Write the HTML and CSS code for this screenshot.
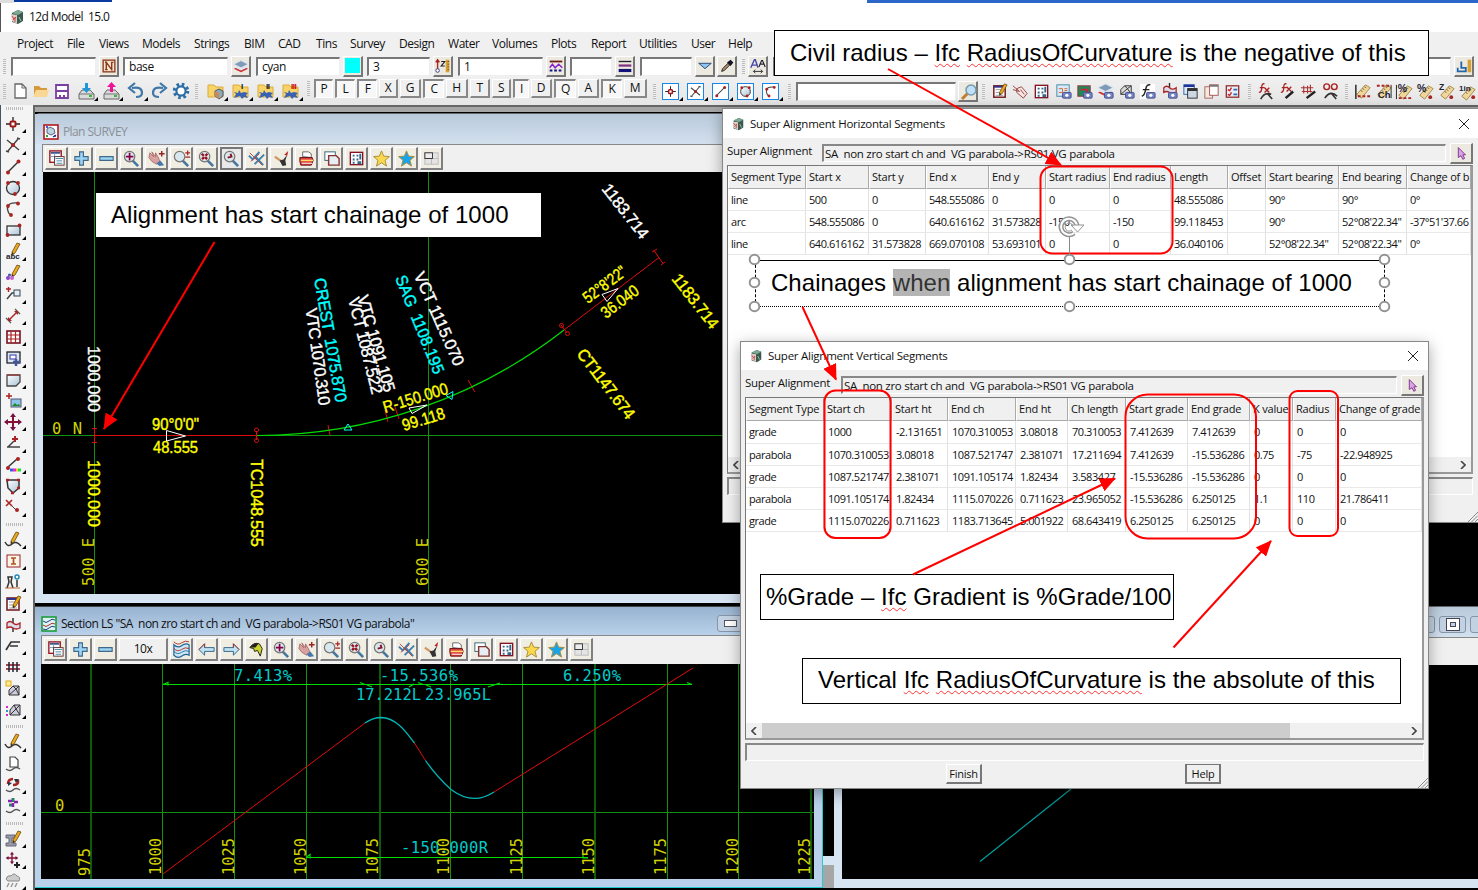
FILE: index.html
```html
<!DOCTYPE html>
<html lang="en">
<head>
<meta charset="utf-8">
<title>12d Model 15.0</title>
<link rel="stylesheet" href="styles.css">
</head>
<body>
<svg class="defs" width="0" height="0">
<defs>
<linearGradient id="steel" x1="0" y1="0" x2="1" y2="1"><stop offset="0" stop-color="#fff"/><stop offset="1" stop-color="#a9c3d6"/></linearGradient>
<marker id="head" markerUnits="userSpaceOnUse" markerWidth="17" markerHeight="14" refX="15" refY="7" orient="auto"><path d="M0 0 16 7 0 14z" fill="#f00"/></marker>
</defs>
<symbol id="cube" viewBox="0 0 16 16"><path d="M3 4 9 1l5 2v9l-5 3-6-2z" fill="#3c5a4c"/><path d="M3 4 9 1l5 2-5 3z" fill="#7fa893"/><path d="M2 5l6 1v9l-5-3z" fill="#d9cfca"/><path d="M3 7l2 3M6 8v5M4 11l3-3" stroke="#c44" fill="none"/><path d="M10 8l2 4" stroke="#9cb"/></symbol>
<symbol id="target" viewBox="0 0 20 20"><path d="M10 3v14M3 10h14" stroke="#222" stroke-width="1.3"/><rect x="7.5" y="7.5" width="5" height="5" rx="1" fill="#fff" stroke="#a01818" stroke-width="2"/></symbol>
<symbol id="cross" viewBox="0 0 20 20"><path d="M4 5l12 10M5 16 15 4M3 16l3 1M14 3l3 1" stroke="#444" stroke-width="1.4" fill="none"/><circle cx="10" cy="10" r="2" fill="#a22"/></symbol>
<symbol id="seg" viewBox="0 0 20 20"><path d="M5 15 15 5" stroke="#333" stroke-width="1.4"/><circle cx="5" cy="15.500" r="2" fill="#a22"/><circle cx="15.500" cy="4.500" r="2" fill="#a22"/></symbol>
<symbol id="circ" viewBox="0 0 20 20"><circle cx="10" cy="10" r="6.500" fill="url(#steel)" stroke="#333" stroke-width="1.300"/><circle cx="5" cy="5" r="1.900" fill="#a22"/><circle cx="15" cy="5" r="1.900" fill="#a22"/><circle cx="12" cy="16" r="1.900" fill="#a22"/></symbol>
<symbol id="arc" viewBox="0 0 20 20"><path d="M15 4Q4 3 4.500 10q1 6 4 6" fill="none" stroke="#444" stroke-width="1.400"/><circle cx="15" cy="4.500" r="1.900" fill="#a22"/><circle cx="5" cy="7" r="1.900" fill="#a22"/><circle cx="8" cy="16" r="1.900" fill="#a22"/></symbol>
<symbol id="rect" viewBox="0 0 20 20"><rect x="4" y="6" width="13" height="9" fill="url(#steel)" stroke="#333" stroke-width="1.300"/><circle cx="16.500" cy="5.500" r="1.900" fill="#a22"/><circle cx="4.500" cy="15" r="1.900" fill="#a22"/></symbol>
<symbol id="pencil" viewBox="0 0 20 20"><path d="M9 12 14 3l3 1-5 9-3 2z" fill="#e9a820" stroke="#6b4a10" stroke-width=".8"/><path d="M9 12l0 3 2-1z" fill="#333"/></symbol>
<symbol id="paint" viewBox="0 0 20 20"><use href="#pencil" y="-1"/><circle cx="5" cy="15" r="2" fill="#84c"/><circle cx="9" cy="15" r="2" fill="#c6c"/><circle cx="6.500" cy="12" r="1.600" fill="#55a"/></symbol>
<symbol id="leader" viewBox="0 0 20 20"><path d="M3 5h5M5.500 3v5" stroke="#a22" stroke-width="1.400"/><path d="M4 15l5-6h2" stroke="#444" stroke-width="1.500" fill="none"/><rect x="11" y="6" width="6" height="6" fill="#e4eef4" stroke="#345"/></symbol>
<symbol id="dim" viewBox="0 0 20 20"><path d="M6 14 14 6" stroke="#a22" stroke-width="1.500"/><path d="M3 12l5 5M12 3l5 5" stroke="#555" stroke-width="1.300"/><path d="M5 11v4h4zM11 5h4v4z" fill="#a22"/></symbol>
<symbol id="table" viewBox="0 0 20 20"><rect x="4" y="4" width="13" height="12" fill="#fff" stroke="#712" stroke-width="1.600"/><path d="M4 8h13M4 12h13M8 4v12M12.500 4v12" stroke="#a22" stroke-width="1.200"/></symbol>
<symbol id="frame" viewBox="0 0 20 20"><rect x="4" y="4" width="13" height="11" fill="#dce8f0" stroke="#223" stroke-width="1.300"/><rect x="7" y="7" width="6" height="4" fill="#fff" stroke="#33a"/><path d="M13 11v7M10 14h7" stroke="#459" stroke-width="2.500"/></symbol>
<symbol id="poly" viewBox="0 0 20 20"><path d="M4 5h13v7l-4 4H4z" fill="url(#steel)" stroke="#444" stroke-width="1.300"/><path d="M4 5h13" stroke="#a33"/></symbol>
<symbol id="image" viewBox="0 0 20 20"><path d="M3 5h6M6 2v6" stroke="#a22" stroke-width="1.500"/><rect x="8" y="8" width="10" height="8" fill="#8cc4e8" stroke="#557"/><path d="M9 15l3-3 2 2 2-1 1 2z" fill="#282"/></symbol>
<symbol id="move" viewBox="0 0 20 20"><path d="M10 4v12M4 10h12" stroke="#813" stroke-width="2"/><path d="M10 1l3 4H7zM10 19l3-4H7zM1 10l4-3v6zM19 10l-4-3v6z" fill="#714"/></symbol>
<symbol id="survey" viewBox="0 0 20 20"><path d="M12 3v6M9 6h6" stroke="#a22" stroke-width="2"/><path d="M5 14l6-6M4 14h13" stroke="#444" stroke-width="1.500"/></symbol>
<symbol id="rainbow" viewBox="0 0 20 20"><path d="M5 12 14 4" stroke="#333" stroke-width="1.500"/><circle cx="15" cy="4" r="2" fill="#a22"/><circle cx="5" cy="13" r="2" fill="#a22"/><path d="M7 15h3" stroke="#26e" stroke-width="3"/><path d="M10 15h3" stroke="#e2c" stroke-width="3"/><path d="M13 15h2" stroke="#ec2" stroke-width="3"/><path d="M15 15h3" stroke="#2d4" stroke-width="3"/></symbol>
<symbol id="shield" viewBox="0 0 20 20"><path d="M4 4h12v8l-6 5-5-5z" fill="url(#steel)" stroke="#333" stroke-width="1.500"/><path d="M3 4h3M14 4h3M14 12h3M8 17h3" stroke="#a22" stroke-width="2.500"/></symbol>
<symbol id="del" viewBox="0 0 20 20"><path d="M3 3l6 6M9 3 3 9" stroke="#a22" stroke-width="1.600"/><path d="M9 9l4 4" stroke="#444"/><circle cx="14" cy="13" r="2" fill="#a22"/></symbol>
<symbol id="draw" viewBox="0 0 20 20"><path d="M2 12q3 6 7 2t9 2" stroke="#333" stroke-width="1.500" fill="none"/><use href="#pencil" x="-1" y="-1"/></symbol>
<symbol id="ibeam" viewBox="0 0 20 20"><rect x="4" y="4" width="13" height="12" fill="#fdf4ea" stroke="#922"/><path d="M8 7h5M10.500 7v6M8 13h5" stroke="#a52" stroke-width="1.700"/></symbol>
<symbol id="people" viewBox="0 0 20 20"><path d="M4 16l2-6-1-5h4l-1 5 2 6M14 8v7" stroke="#333" stroke-width="1.500" fill="none"/><circle cx="14" cy="5" r="2" fill="#fff" stroke="#28b" stroke-width="1.500"/><path d="M2 16h15" stroke="#b63"/></symbol>
<symbol id="note" viewBox="0 0 20 20"><rect x="4" y="4" width="12" height="12" fill="#fff" stroke="#722" stroke-width="1.600"/><path d="M4 5h12" stroke="#338" stroke-width="2"/><path d="M6 8h6M6 11h6M6 14h8" stroke="#99a"/><use href="#pencil" x="1" y="-1"/></symbol>
<symbol id="align" viewBox="0 0 20 20"><path d="M10 3v14" stroke="#333" stroke-width="1.500"/><path d="M4 8q3-3 6 0t7 0v5q-4 2-7 0t-6 0z" fill="#dde" stroke="#a22" stroke-width="1.300"/></symbol>
<symbol id="step" viewBox="0 0 20 20"><path d="M3 14 8 6h9M7 10h8" stroke="#333" stroke-width="1.700" fill="none"/></symbol>
<symbol id="rail" viewBox="0 0 20 20"><path d="M3 8h14M3 12h14" stroke="#812" stroke-width="1.500"/><path d="M6 5v10M10 5v10M14 5v10" stroke="#223" stroke-width="1.500"/></symbol>
<symbol id="mesh" viewBox="0 0 20 20"><rect x="3" y="2" width="5" height="5" fill="#fe8" stroke="#da2"/><path d="M6 16V11l4-4h6v9z" fill="#ccd" stroke="#333"/><path d="M6 16l7-6 3 6M10 7l3 3 3-3" stroke="#333" fill="none"/></symbol>
<symbol id="mesh2" viewBox="0 0 20 20"><path d="M7 15v-5l4-5h6v10z" fill="#ccd" stroke="#333"/><path d="M7 15l6-6 4 6M11 5l2 4 4-4" stroke="#333" fill="none"/><path d="M4 6v2M4 14v2" stroke="#d2c" stroke-width="2"/><path d="M4 10v2" stroke="#29c" stroke-width="2"/></symbol>
<symbol id="page" viewBox="0 0 20 20"><path d="M7 3h5l3 3v7H7z" fill="#fff" stroke="#444" stroke-width="1.200"/><path d="M3 15q4 3 7 0t7 0" fill="none" stroke="#555" stroke-width="1.500"/></symbol>
<symbol id="swirl" viewBox="0 0 20 20"><path d="M5 9q0-5 5-5M15 5q1 5-5 5" stroke="#a22" stroke-width="2.500" fill="none"/><path d="M11 4l5 0-3 4zM9 8l-4 3 0-4" fill="#234"/><path d="M3 15q4 3 7 0t7 0" fill="none" stroke="#555" stroke-width="1.500"/></symbol>
<symbol id="swirl2" viewBox="0 0 20 20"><path d="M10 2v4M6 9h4" stroke="#286" stroke-width="3"/><path d="M5 5h4M10 7v4M11 6h4" stroke="#82a" stroke-width="2.500"/><path d="M3 15q4 3 7 0t7 0" fill="none" stroke="#555" stroke-width="1.500"/></symbol>
<symbol id="anvil" viewBox="0 0 20 20"><path d="M3 6h9v3H9v5h4v3H3v-3h3V9H3z" fill="#99a" stroke="#667"/><use href="#pencil" x="1" y="-1"/></symbol>
<symbol id="move2" viewBox="0 0 20 20"><use href="#move" width="14" height="14" x="2" y="1"/><path d="M14 12v6M11 15h6" stroke="#222" stroke-width="2"/></symbol>
<symbol id="cloud" viewBox="0 0 20 20"><path d="M5 10q-3-1-1-4 2-2 4-1 3-4 6 0 4 1 2 5z" fill="#ccc" stroke="#888"/><path d="M6 12l-2 4M10 12l-2 4M14 12l-2 4" stroke="#999" stroke-width="1.500"/></symbol>
<symbol id="new" viewBox="0 0 20 20"><path d="M5 3h7l4 4v10H5z" fill="#fff" stroke="#666" stroke-width="1.300"/><path d="M12 3v4h4" fill="none" stroke="#666"/></symbol>
<symbol id="open" viewBox="0 0 20 20"><path d="M3 16V5h5l2 2h6v9z" fill="#d49a3c"/><path d="M2 16l3-7h13l-2 7z" fill="#f9d795"/></symbol>
<symbol id="save" viewBox="0 0 20 20"><path d="M4 4h12v13H4z" fill="#fff" stroke="#7b3fa0" stroke-width="1.800"/><path d="M4 10h12" stroke="#7b3fa0" stroke-width="2"/><path d="M8 14v3M12 14v3" stroke="#7b3fa0" stroke-width="2"/></symbol>
<symbol id="disk" viewBox="0 0 20 20"><path d="M3 13l3-4h8l4 4v5H3z" fill="#dadada" stroke="#666"/><path d="M3 13h15" stroke="#777"/><rect x="13" y="14" width="3" height="2" fill="#3b3"/></symbol>
<symbol id="imp" viewBox="0 0 20 20"><use href="#disk"/><path d="M9 2h3v5h3l-4.500 5L6 7h3z" fill="#1c98d8"/></symbol>
<symbol id="exp" viewBox="0 0 20 20"><use href="#disk"/><path d="M9 11h3V6h3L10.500 1 6 6h3z" fill="#f0139a"/></symbol>
<symbol id="undo" viewBox="0 0 20 20"><path d="M6 7q10-2 10 5 0 4-6 4" fill="none" stroke="#3f78a8" stroke-width="2.200"/><path d="M9 2 3 7l6 5" fill="none" stroke="#3f78a8" stroke-width="2.200"/></symbol>
<symbol id="gear" viewBox="0 0 20 20"><circle cx="10" cy="10" r="6.500" fill="none" stroke="#2c6fa6" stroke-width="3.500" stroke-dasharray="2.500 2.600"/><circle cx="10" cy="10" r="4.600" fill="#fff" stroke="#2c6fa6" stroke-width="2.200"/></symbol>
<symbol id="fold" viewBox="0 0 20 20"><path d="M2 16V4h6l2 2h7v10z" fill="#f8d468" stroke="#d9ac3a"/></symbol>
<symbol id="foldb" viewBox="0 0 20 20"><use href="#fold"/><path d="M9 10l4-2 4 2v5l-4 3-4-3z" fill="#8ab" stroke="#556"/><path d="M9 10l4 2v6l-4-3z" fill="#c85"/></symbol>
<symbol id="foldg" viewBox="0 0 20 20"><use href="#fold"/><path d="M3 17l2-4-2-2 4 1 1-3 2 3 3-1 4 1-2 2 2 3-4-1-2 2-2-3-3 1z" fill="#3a62b4"/></symbol>
<symbol id="nn" viewBox="0 0 20 20"><rect x="3.500" y="3.500" width="13" height="13" fill="#f6e6d8" stroke="#8c3a1a" stroke-width="1.500"/><path d="M7 14V6l6 8V6M5.500 6H8M12 6h3M5.500 14h3" stroke="#8c3a1a" stroke-width="1.600" fill="none"/></symbol>
<symbol id="layers" viewBox="0 0 20 20"><path d="M2 13l8-3 8 3-8 4z" fill="#c33"/><path d="M2 11l8-3 8 3-8 4z" fill="#dde8f2"/><path d="M2 8l8-4 8 4-8 4z" fill="#7f9bb8" stroke="#d6e4ee"/></symbol>
<symbol id="height" viewBox="0 0 20 20"><path d="M4 4v12M2 6l2-3 2 3" stroke="#a22" stroke-width="1.500" fill="none"/><circle cx="4" cy="15" r="2" fill="#fff" stroke="#338"/><path d="M8 5h4l-4 5h4" stroke="#222" stroke-width="1.300" fill="none"/><path d="M15 3v14" stroke="#d8a030" stroke-width="4"/><path d="M15 5h2M15 8h2M15 11h2M15 14h2" stroke="#754"/></symbol>
<symbol id="ltype" viewBox="0 0 20 20"><path d="M3 5h14" stroke="#6b1c10" stroke-width="2"/><path d="M3 12l3-4 3 4 4-4 4 4" fill="none" stroke="#82c" stroke-width="1.600"/><path d="M3 15h14" stroke="#118" stroke-width="2.200" stroke-dasharray="3 2"/></symbol>
<symbol id="lweight" viewBox="0 0 20 20"><path d="M3 5h14" stroke="#223" stroke-width="1.500"/><path d="M3 9.500h14" stroke="#813080" stroke-width="2.500"/><path d="M3 15h14" stroke="#117" stroke-width="3.500"/></symbol>
<symbol id="drop" viewBox="0 0 20 20"><path d="M3 7h14l-7 6z" fill="#8fc4f0" stroke="#246"/></symbol>
<symbol id="dropper" viewBox="0 0 20 20"><path d="M4 16l1-3 6-6 2 2-6 6z" fill="#a86" stroke="#222"/><path d="M10 6l4-3 3 3-3 4z" fill="#112"/></symbol>
<symbol id="aa" viewBox="0 0 20 20"><path d="M2 12 6 3h1l3 9M4 9h5" fill="none" stroke="#44a" stroke-width="1.500"/><path d="M11 11l3-7h1l3 7M12 8h5" fill="none" stroke="#223" stroke-width="1.300"/><path d="M5 16h10M7 14l-2 2 2 2M13 14l2 2-2 2" stroke="#222" fill="none"/></symbol>
<symbol id="glass" viewBox="0 0 20 20"><path d="M11 12l6 6" stroke="#4577a0" stroke-width="2.800"/><circle cx="8" cy="8" r="5.500" fill="#d9e8ee" stroke="#777" stroke-width="1.300"/></symbol>
<symbol id="search" viewBox="0 0 20 20"><path d="M9 11l-6 6" stroke="#c08030" stroke-width="3"/><circle cx="12" cy="8" r="5" fill="#bfe0f8" stroke="#79a" stroke-width="1.500"/></symbol>
<symbol id="zfit" viewBox="0 0 20 20"><use href="#glass"/><path d="M8 4v8M4 8h8" stroke="#804" stroke-width="1.800"/></symbol>
<symbol id="zpm" viewBox="0 0 20 20"><use href="#glass"/><path d="M14 4h5M16.500 1.500v5M14 8.500h5" stroke="#a22" stroke-width="1.300"/></symbol>
<symbol id="zin" viewBox="0 0 20 20"><use href="#glass"/><path d="M5 5l6 6M11 5l-6 6" stroke="#912" stroke-width="2.500" stroke-dasharray="3 2"/></symbol>
<symbol id="zprev" viewBox="0 0 20 20"><use href="#glass"/><path d="M6 9l4-1-1-3" stroke="#812" stroke-width="2" fill="none"/></symbol>
<symbol id="hand" viewBox="0 0 20 20"><path d="M3 4l4 4-2-5 4 5 0-4 3 5 2 5-4 2-5-3-3-4z" fill="#d9a0a0" stroke="#844" stroke-width=".6"/><path d="M10 15l4-3 4 5-5 1z" fill="#47a"/><path d="M12.500 5h6M15.500 2v6" stroke="#922" stroke-width="1.500"/></symbol>
<symbol id="wins" viewBox="0 0 20 20"><rect x="3" y="2" width="12" height="12" fill="#fff" stroke="#912" stroke-width="1.400"/><path d="M4 4h10" stroke="#458" stroke-width="2"/><path d="M4 8h10M8 4v9" stroke="#69b"/><rect x="8" y="8" width="10" height="9" fill="#fff" stroke="#633"/><path d="M9 10h8M10 12.500h6M10 15h6" stroke="#48a"/></symbol>
<symbol id="plus" viewBox="0 0 20 20"><path d="M8 3h4v5h5v4h-5v5H8v-5H3V8h5z" fill="#9cd4f4" stroke="#42688a" stroke-width="1.200"/></symbol>
<symbol id="minus" viewBox="0 0 20 20"><path d="M3 8h14v4H3z" fill="#9cd4f4" stroke="#42688a" stroke-width="1.200"/></symbol>
<symbol id="redraw" viewBox="0 0 20 20"><path d="M2 7l4 4 7-8M8 16 18 6M9 8l8 9M8 9l3 2" stroke="#3b7fae" stroke-width="2" fill="none"/><path d="M3 4l13 13M4 13 13 5" stroke="#b44" fill="none"/></symbol>
<symbol id="brush" viewBox="0 0 20 20"><path d="M3 8l7 5" stroke="#c96" stroke-width="2.500"/><path d="M8 12l4-1 4-5-2 6 1 5-4 1z" fill="#333"/><path d="M13 6l4-4-1 5z" fill="#b22"/></symbol>
<symbol id="print" viewBox="0 0 20 20"><path d="M6 8V3h6l3 2v4z" fill="#fff" stroke="#666"/><path d="M3 9h13l1 3-2 5H4l-1-4z" fill="#d44" stroke="#611"/><path d="M4 12h13" stroke="#fd6" stroke-width="1.500"/><path d="M5 15h11" stroke="#fff"/></symbol>
<symbol id="copy" viewBox="0 0 20 20"><rect x="3" y="3" width="11" height="9" fill="#fff" stroke="#367"/><path d="M7 7h8l3 3v7H7z" fill="#e6eef4" stroke="#833" stroke-width="1.500"/></symbol>
<symbol id="sheet" viewBox="0 0 20 20"><rect x="3.500" y="3.500" width="13" height="13" fill="#fff" stroke="#812" stroke-width="1.400"/><path d="M6 6h2v2H6zM10 6h2v2h-2zM6 10h2v2H6zM10 10h2v2h-2zM6 13.500h2v2H6zM13 5h2v6h-2zM11 13h4v3h-4z" fill="#368"/></symbol>
<symbol id="star" viewBox="0 0 20 20"><path d="M10 2l2.300 5.500 6 .5-4.600 3.900L15.300 18 10 14.500 4.700 18l1.600-6.100L1.700 8l6-.5z" stroke="#a98c3c"/></symbol>
<symbol id="layout" viewBox="0 0 20 20"><rect x="3" y="4" width="14" height="12" fill="#e4e4e4" stroke="#bbb"/><path d="M10 4v12M3 10h14" stroke="#bbb"/><rect x="3" y="4" width="8" height="6" fill="#eee" stroke="#333"/></symbol>
<symbol id="wave" viewBox="0 0 20 20"><path d="M2 5q4 4 8 1t8-1v11q-4-2-8 1t-8-1z" fill="#cfe6f4" stroke="#269" stroke-width="1.300"/><path d="M2 2q4 4 8 1t8-1M2 9q4 4 8 1t8-1" fill="none" stroke="#a33"/><path d="M2 12q4 4 8 1t8-1" fill="none" stroke="#27a"/></symbol>
<symbol id="left" viewBox="0 0 20 20"><path d="M2 10l6-6v4h10v4H8v4z" fill="#bfe2f4" stroke="#368"/><path d="M2 10l6-6v4" fill="none" stroke="#a33"/></symbol>
<symbol id="lamp" viewBox="0 0 20 20"><path d="M3 8q4-6 10-4l3 5-2 8-3-6-3 1-1-3z" fill="#cdd628" stroke="#222"/><path d="M3 8q5-6 9-4l-3 4z" fill="#222"/></symbol>
<symbol id="plan" viewBox="0 0 16 16"><rect x="1" y="1" width="14" height="14" fill="#fff" stroke="#b01c1c" stroke-width="1.600"/><path d="M4 5l3-2 4 2 1 4-4 2-4-2z" fill="#bcd4e4" stroke="#567"/><path d="M3 12h2M12 11v2" stroke="#2a2" stroke-width="2"/><path d="M10 13l3-2M3 3h2" stroke="#22c" stroke-width="1.500"/></symbol>
<symbol id="sect" viewBox="0 0 16 16"><rect x="1" y="1" width="14" height="14" fill="#dff2f4" stroke="#1c9c3c" stroke-width="1.600"/><path d="M2 5q3 3 6 0t6-1M2 13q3 2 6-1t6-1" fill="none" stroke="#248"/><path d="M2 9q3 3 6 0t6-1" fill="none" stroke="#a33"/></symbol>
<symbol id="tag" viewBox="0 0 20 20"><path d="M6 7l5-2 6 7-4 5-7-6z" fill="#f4e6e0" stroke="#944"/><path d="M2 4l7 6M2 8l7 2M10 8l4 5" stroke="#944" fill="none"/></symbol>
<symbol id="cam" viewBox="0 0 20 20"><rect x="9" y="11" width="9" height="6" rx="1" fill="#7784c8" stroke="#44508c"/><circle cx="13.500" cy="14" r="1.700" fill="#fff"/></symbol>
<symbol id="wincam" viewBox="0 0 20 20"><rect x="3" y="3" width="13" height="12" fill="#dceaf8" stroke="#48a"/><path d="M5 7h4v4H5M11 7h3M11 9h3" stroke="#c63" fill="none"/><use href="#cam"/></symbol>
<symbol id="mapcam" viewBox="0 0 20 20"><rect x="3" y="4" width="13" height="11" fill="#285" stroke="#934"/><path d="M6 8h7v4" stroke="#c24" stroke-width="2" fill="none"/><use href="#cam"/></symbol>
<symbol id="laycam" viewBox="0 0 20 20"><use href="#layers" y="-2"/><use href="#cam"/></symbol>
<symbol id="meshcam" viewBox="0 0 20 20"><path d="M4 13V8l4-4h7v9z" fill="#ddd" stroke="#333"/><path d="M4 13l7-6 4 6M8 4l3 3 4-3" stroke="#333" fill="none"/><use href="#cam"/></symbol>
<symbol id="fcam" viewBox="0 0 20 20"><path d="M2 2h16v16H2z" fill="#fff"/><path d="M13 3q-4-1-5 5t-4 7M5 8h7" stroke="#222" stroke-width="1.500" fill="none"/><use href="#cam"/></symbol>
<symbol id="alcam" viewBox="0 0 20 20"><use href="#align" y="-2"/><use href="#cam"/></symbol>
<symbol id="wind" viewBox="0 0 20 20"><rect x="3" y="3" width="11" height="10" fill="#dceaf8" stroke="#36a"/><path d="M3 4h11" stroke="#239" stroke-width="2.500"/><rect x="7" y="7" width="10" height="10" fill="#ccd8e4" stroke="#333"/><path d="M7 8h10" stroke="#333" stroke-width="3"/></symbol>
<symbol id="papers" viewBox="0 0 20 20"><rect x="3" y="5" width="8" height="12" fill="#f2eadc" stroke="#a66"/><rect x="8" y="3" width="9" height="11" fill="#fff" stroke="#a55"/><path d="M8 4h9" stroke="#777" stroke-width="2"/></symbol>
<symbol id="checks" viewBox="0 0 20 20"><rect x="3.500" y="4" width="13" height="12" fill="#e4f0fa" stroke="#933" stroke-width="1.400"/><path d="M5 8l2 1 2-3M5 13l2 1 2-3" stroke="#c22" fill="none" stroke-width="1.500"/><path d="M11 8h4M11 13h4" stroke="#36a" stroke-width="2"/></symbol>
<symbol id="fx" viewBox="0 0 20 20"><path d="M9 2q-3-1-3 4t-3 5M4 6h5M9 6l5 5M14 6l-5 5" stroke="#a22" stroke-width="1.400" fill="none"/><path d="M5 18q4-8 11-5M12 12l5 6" stroke="#333" stroke-width="1.700" fill="none"/></symbol>
<symbol id="fxp" viewBox="0 0 20 20"><path d="M9 2q-3-1-3 4t-3 5M4 6h5M9 5l5 5M14 5l-5 5" stroke="#a22" stroke-width="1.400" fill="none"/><path d="M8 17l8-7" stroke="#222" stroke-width="2.500"/></symbol>
<symbol id="glp" viewBox="0 0 20 20"><path d="M2 6h13M3 10h11M5 4v8M9 4v8M12 3v8" stroke="#a33" stroke-width="1.200" fill="none"/><path d="M8 17l9-7" stroke="#222" stroke-width="2.500"/></symbol>
<symbol id="goggle" viewBox="0 0 20 20"><circle cx="6" cy="5" r="3" fill="none" stroke="#a22" stroke-width="1.500"/><circle cx="14" cy="5" r="3" fill="none" stroke="#a22" stroke-width="1.500"/><path d="M4 17q6-9 13-2M11 12l5 6" stroke="#333" stroke-width="1.700" fill="none"/></symbol>
<symbol id="ruler" viewBox="0 0 20 20"><path d="M4 13 13 3l5 3-9 11z" fill="#f0d69a" stroke="#a5894a"/><path d="M8 9l2 1M10 7l2 1M12 5l2 1" stroke="#764"/></symbol>
<symbol id="rul1" viewBox="0 0 20 20"><use href="#ruler"/><path d="M3 3v15" stroke="#222" stroke-width="1.500"/><path d="M5 15h13" stroke="#a22" stroke-width="2" stroke-dasharray="3 2"/></symbol>
<symbol id="level" viewBox="0 0 20 20"><path d="M3 12v4h9v-4H7V5" fill="none" stroke="#26a" stroke-width="2"/><path d="M16 3v14" stroke="#d8a030" stroke-width="4"/></symbol>
<symbol id="cursor" viewBox="0 0 20 20"><path d="M7 4v11l3-2 2 4 2-1-2-4h3z" fill="#d9a4e4" stroke="#7a2c8c"/></symbol>
</svg>

<div class="topstrip"><i></i><b></b><s></s></div>
<header class="apptitle"><svg class="i16"><use href="#cube"/></svg><span>12d Model  15.0</span></header>
<nav class="menu"><span>Project</span><span>File</span><span>Views</span><span>Models</span><span>Strings</span><span>BIM</span><span>CAD</span><span>Tins</span><span>Survey</span><span>Design</span><span>Water</span><span>Volumes</span><span>Plots</span><span>Report</span><span>Utilities</span><span>User</span><span>Help</span></nav>
<div class="fields">
<i class="grip"></i><div class="box"></div><button class="tb"><svg><use href="#nn"/></svg></button>
<div class="box">base</div><button class="tb"><svg><use href="#layers"/></svg></button>
<div class="box">cyan</div><button class="tb"><i class="swatch"></i></button>
<div class="box">3</div><button class="tb"><svg><use href="#height"/></svg></button>
<div class="box">1</div><button class="tb"><svg><use href="#ltype"/></svg></button>
<div class="box"></div><button class="tb"><svg><use href="#lweight"/></svg></button>
<div class="box"></div><button class="tb"><svg><use href="#drop"/></svg></button><button class="tb"><svg><use href="#dropper"/></svg></button>
<i class="grip"></i><button class="tb"><svg><use href="#aa"/></svg></button><div class="box"></div><button class="tb"><svg><use href="#level"/></svg></button>
</div>
<div class="tools">
<div class="grp files"><i class="grip"></i><svg><use href="#new"/></svg><svg><use href="#open"/></svg><svg><use href="#save"/></svg><span class="fly"><svg><use href="#imp"/></svg></span><span class="fly"><svg><use href="#exp"/></svg></span><span class="fly"><svg><use href="#undo"/></svg></span><svg class="flip"><use href="#undo"/></svg><svg><use href="#gear"/></svg></div>
<div class="grp folders"><i class="grip"></i><span class="fly"><svg><use href="#foldb"/></svg></span><span class="fly n1"><svg><use href="#foldg"/></svg></span><span class="fly n2"><svg><use href="#foldg"/></svg></span><span class="fly n3"><svg><use href="#foldg"/></svg></span></div>
<div class="letters"><i class="grip"></i><b class="on">P</b><b class="on">L</b><b class="on">F</b><b>X</b><b>G</b><b class="on">C</b><b>H</b><b>T</b><b>S</b><b class="on">I</b><b>D</b><b class="on">Q</b><b>A</b><b class="on">K</b><b>M</b></div>
<div class="grp snaps"><i class="grip"></i><span class="fly fr"><svg><use href="#target"/></svg></span><span class="fly fr"><svg><use href="#cross"/></svg></span><span class="fly fr"><svg><use href="#seg"/></svg></span><span class="fly fr"><svg><use href="#circ"/></svg></span><span class="fly fr"><svg><use href="#arc"/></svg></span></div>
<div class="find"><i class="grip"></i><div class="box"></div><button class="tb"><svg><use href="#search"/></svg></button></div>
<div class="grp small"><i class="grip"></i><svg><use href="#note"/></svg><svg><use href="#tag"/></svg><svg><use href="#sheet"/></svg><svg><use href="#wincam"/></svg><svg><use href="#mapcam"/></svg><svg><use href="#laycam"/></svg><svg><use href="#meshcam"/></svg><svg><use href="#fcam"/></svg><svg><use href="#alcam"/></svg><svg><use href="#wind"/></svg><svg><use href="#papers"/></svg><svg><use href="#checks"/></svg></div>
<div class="grp small g2"><i class="grip"></i><svg><use href="#fx"/></svg><svg><use href="#fxp"/></svg><svg><use href="#glp"/></svg><svg><use href="#goggle"/></svg></div>
<div class="grp small g3"><i class="grip"></i><svg><use href="#rul1"/></svg>
<svg class="ti" viewBox="0 0 20 20"><use href="#ruler"/><path d="M3 4h13" stroke="#a22" stroke-width="2" stroke-dasharray="3 2"/><path d="M18 3v14" stroke="#222"/><text x="4" y="17" font-size="10">Ch</text></svg>
<svg class="ti" viewBox="0 0 20 20"><use href="#ruler" y="1"/><path d="M1.500 3v15" stroke="#222"/><path d="M4 17h13" stroke="#a22" stroke-width="2" stroke-dasharray="3 2"/><text x="3" y="10" font-size="11">%</text></svg>
<svg class="ti" viewBox="0 0 20 20"><use href="#ruler" y="1"/><text x="1" y="10" font-size="11">%</text><circle cx="15" cy="16" r="2" fill="#a22"/></svg>
<svg class="ti" viewBox="0 0 20 20"><use href="#ruler" y="1"/><text x="2" y="8" font-size="9">Z</text><circle cx="15" cy="16" r="2" fill="#a22"/></svg>
<svg class="ti" viewBox="0 0 20 20"><use href="#ruler" y="2"/><text x="1" y="9" font-size="8.500">1in</text><circle cx="16" cy="16" r="2" fill="#a22"/></svg></div>
</div>
<div class="workspace">
<aside class="side">
<i class="hgrip"></i>
<span class="fly"><svg><use href="#target"/></svg></span><span class="fly"><svg><use href="#cross"/></svg></span><span class="fly"><svg><use href="#seg"/></svg></span><span class="fly"><svg><use href="#circ"/></svg></span><span class="fly"><svg><use href="#arc"/></svg></span><span class="fly"><svg><use href="#rect"/></svg></span><span class="fly"><svg class="ti" viewBox="0 0 20 20"><use href="#pencil" y="-2"/><text x="3" y="17" font-size="8">abc</text></svg></span><span class="fly"><svg><use href="#paint"/></svg></span><span class="fly"><svg><use href="#leader"/></svg></span><span class="fly"><svg><use href="#dim"/></svg></span><span class="fly"><svg><use href="#table"/></svg></span><span class="fly"><svg><use href="#frame"/></svg></span><span class="fly"><svg><use href="#poly"/></svg></span><span class="fly"><svg><use href="#image"/></svg></span><span class="fly"><svg><use href="#move"/></svg></span><span class="fly"><svg><use href="#survey"/></svg></span><span class="fly"><svg><use href="#rainbow"/></svg></span><span class="fly"><svg><use href="#shield"/></svg></span><span class="fly"><svg><use href="#del"/></svg></span>
<i class="hgrip"></i>
<span class="fly"><svg><use href="#draw"/></svg></span><span class="fly"><svg><use href="#ibeam"/></svg></span><span class="fly"><svg><use href="#people"/></svg></span><span class="fly"><svg><use href="#note"/></svg></span><span class="fly"><svg><use href="#align"/></svg></span><span class="fly"><svg><use href="#step"/></svg></span><span class="fly"><svg><use href="#rail"/></svg></span><span class="fly"><svg><use href="#mesh"/></svg></span><span class="fly"><svg><use href="#mesh2"/></svg></span>
<i class="hgrip"></i>
<span class="fly"><svg><use href="#draw"/></svg></span><span><svg><use href="#page"/></svg></span><span class="fly"><svg><use href="#swirl"/></svg></span><span class="fly"><svg><use href="#swirl2"/></svg></span>
<i class="hgrip"></i>
<span class="fly"><svg><use href="#anvil"/></svg></span><span class="fly"><svg><use href="#move2"/></svg></span><span class="fly"><svg><use href="#cloud"/></svg></span>
</aside>
<main class="mdi"></main>
</div>

<section class="win plan">
<div class="wtitle"><svg class="i16"><use href="#plan"/></svg><span>Plan SURVEY</span><i class="cap"></i></div>
<div class="wbar"><button><svg><use href="#wins"/></svg></button><button><svg><use href="#plus"/></svg></button><button><svg><use href="#minus"/></svg></button><button><svg><use href="#zfit"/></svg></button><button><svg><use href="#hand"/></svg></button><button><svg><use href="#zpm"/></svg></button><button><svg><use href="#zin"/></svg></button><button class="cur"><svg><use href="#zprev"/></svg></button><button><svg><use href="#redraw"/></svg></button><button><svg><use href="#brush"/></svg></button><button><svg><use href="#print"/></svg></button><button><svg><use href="#copy"/></svg></button><button><svg><use href="#sheet"/></svg></button><button><svg class="gold"><use href="#star"/></svg></button><button><svg class="blue"><use href="#star"/></svg></button><button><svg><use href="#layout"/></svg></button></div>
<svg class="canvas" viewBox="43 172 709 422">
<g class="grid"><path d="M94.500 172v422M428.500 172v422M43 435.500h709"/></g>
<path class="red" d="M95 435.500h162M92 428.500h5M94.500 428v14M92 442.500h5M256.500 431v9M564 330l95-72.500M654 250.500l9 13M652 252l5-3M661 265l4-3M561 325l6 8M328 425l2 10M385 410l3 12M395 407l4 12M468 380l7 12"/>
<g class="red"><circle cx="256.500" cy="430" r="2"/><circle cx="256.500" cy="440.500" r="2"/><circle cx="561.500" cy="325.500" r="2"/><circle cx="567.500" cy="333.500" r="2"/></g>
<path class="lime" d="M257 435.500A500 500 0 0 0 564 330"/>
<g class="wht"><path d="M166.500 430.500v10.500l19-5zM409 408l18-3-15 8.500zM602 294.500l16-6-11 13z"/></g>
<g class="cya"><path d="M344 430l4-6 4 6zM446 395.500l7-4-1 8z"/></g>
<g class="lab">
<text class="w" transform="translate(88,346) rotate(90)" textLength="66">1000.000</text>
<text transform="translate(88,460) rotate(90)" textLength="67">1000.000</text>
<text transform="translate(251,459) rotate(90)" textLength="88">TC1048.555</text>
<text x="152" y="430" textLength="47" lengthAdjust="spacingAndGlyphs">90°0'0"</text><text x="153" y="453" textLength="45" lengthAdjust="spacingAndGlyphs">48.555</text>
<text class="c" transform="translate(314,279) rotate(80)" textLength="126">CREST  1075.870</text>
<text class="w" transform="translate(305.500,309) rotate(82)" textLength="98">VTC 1070.310</text>
<text class="w" transform="translate(357,297) rotate(74)" textLength="100">VTC 1091.105</text>
<text class="w" transform="translate(348,299) rotate(76)" textLength="99">VCT 1087.522</text>
<text class="c" transform="translate(395,278) rotate(68)" textLength="105" lengthAdjust="spacingAndGlyphs">SAG  1108.195</text>
<text class="w" transform="translate(413.500,275) rotate(66)" textLength="101">VCT 1115.070</text>
<text transform="translate(385,413) rotate(-17)" textLength="67" lengthAdjust="spacingAndGlyphs">R-150.000</text>
<text transform="translate(404,431) rotate(-17)" textLength="44" lengthAdjust="spacingAndGlyphs">99.118</text>
<text transform="translate(588,304) rotate(-37)" textLength="50" lengthAdjust="spacingAndGlyphs">52°8'22"</text>
<text transform="translate(606,319) rotate(-37)" textLength="43" lengthAdjust="spacingAndGlyphs">36.040</text>
<text class="w" transform="translate(601,189) rotate(52)" textLength="65">1183.714</text>
<text transform="translate(671,279) rotate(52)" textLength="65">1183.714</text>
<text transform="translate(576,354) rotate(52.500)" textLength="84">CT1147.674</text>
</g>
<g class="mono"><text x="52" y="434" textLength="30">0 N</text><text transform="translate(94,586) rotate(-90)" textLength="48">500 E</text><text transform="translate(427.500,586) rotate(-90)" textLength="48">600 E</text></g>
</svg>
</section>

<section class="win third">
<div class="wtitle"><i class="cap"></i><i class="cap mid"></i><i class="cap"></i></div>
<div class="wbar"></div>
<svg class="canvas" viewBox="842 665 636 214"><path class="teal" d="M980 861.500 1071 789"/></svg>
</section>

<section class="win section">
<div class="wtitle"><svg class="i16"><use href="#sect"/></svg><span>Section LS "SA  non zro start ch and  VG parabola-&gt;RS01 VG parabola"</span><i class="cap min"></i></div>
<div class="wbar"><button><svg><use href="#wins"/></svg></button><button><svg><use href="#plus"/></svg></button><button><svg><use href="#minus"/></svg></button><button class="wide">10x</button><button><svg><use href="#wave"/></svg></button><button><svg><use href="#left"/></svg></button><button><svg class="flip"><use href="#left"/></svg></button><button><svg><use href="#lamp"/></svg></button><button><svg><use href="#zfit"/></svg></button><button><svg><use href="#hand"/></svg></button><button><svg><use href="#zpm"/></svg></button><button><svg><use href="#zin"/></svg></button><button><svg><use href="#zprev"/></svg></button><button><svg><use href="#redraw"/></svg></button><button><svg><use href="#brush"/></svg></button><button><svg><use href="#print"/></svg></button><button><svg><use href="#copy"/></svg></button><button><svg><use href="#sheet"/></svg></button><button><svg class="gold"><use href="#star"/></svg></button><button><svg class="blue"><use href="#star"/></svg></button><button><svg><use href="#layout"/></svg></button></div>
<svg class="canvas" viewBox="41 664 773 215">
<g class="grid"><path d="M162.500 664v215M234.500 664v215M306.500 664v215M450.500 664v215M522.500 664v215M667.500 664v215M738.500 664v215M41 812.500h773"/><path class="dk" d="M91 664v215M379.500 664v215M595 664v215M811 664v215"/></g>
<path class="lime" d="M163 684.500h529M163 684.500l5-2v3M360 682.500l5 2M367 685l5 2M409 687l5-3M418 682.500l5 2M426 685l5 2M488 687l12-4M687 682.500l5 2M306 857.500h282M306 857.500l4-3v4M583 854v4h5"/>
<path class="red" d="M163 874 365 723M414.500 743l11 17.500M494 792 693 668"/>
<path class="cy2" d="M365 723Q373 717.500 381 717.500C398 718 408 735 414.500 743M425.500 760.500Q437 777 451 789.500 473 806 494 792"/>
<g class="mono cyan"><text x="234" y="681" textLength="58">7.413%</text><text x="380" y="681" textLength="78">-15.536%</text><text x="563" y="681" textLength="58">6.250%</text><text x="356" y="700" textLength="65">17.212L</text><text x="425" y="700" textLength="66">23.965L</text><text x="401" y="853" textLength="87">-150.000R</text></g>
<g class="mono"><text x="55" y="811">0</text>
<text transform="translate(90,876) rotate(-90)" textLength="28">975</text><text transform="translate(161,875) rotate(-90)" textLength="37">1000</text><text transform="translate(233.500,875) rotate(-90)" textLength="37">1025</text><text transform="translate(305.500,875) rotate(-90)" textLength="37">1050</text><text transform="translate(378,875) rotate(-90)" textLength="37">1075</text><text transform="translate(449,875) rotate(-90)" textLength="37">1100</text><text transform="translate(521.500,875) rotate(-90)" textLength="37">1125</text><text transform="translate(594,875) rotate(-90)" textLength="37">1150</text><text transform="translate(666,875) rotate(-90)" textLength="37">1175</text><text transform="translate(737.500,875) rotate(-90)" textLength="37">1200</text><text transform="translate(810,875) rotate(-90)" textLength="37">1225</text></g>
</svg>
</section>
<div class="sliver"></div>

<section class="dlg horiz">
<div class="dtitle"><svg class="i16"><use href="#cube"/></svg><span>Super Alignment Horizontal Segments</span><svg class="x" viewBox="0 0 10 10"><path d="M0 0l10 10M10 0 0 10"/></svg></div>
<div class="pick"><label>Super Alignment</label><div class="ro">SA  non zro start ch and  VG parabola-&gt;RS01 VG parabola</div><button class="tb"><svg><use href="#cursor"/></svg></button></div>
<div class="list">
<div class="row hd"><span>Segment Type</span><span>Start x</span><span>Start y</span><span>End x</span><span>End y</span><span>Start radius</span><span>End radius</span><span>Length</span><span>Offset</span><span>Start bearing</span><span>End bearing</span><span>Change of b</span></div>
<div class="row"><span>line</span><span>500</span><span>0</span><span>548.555086</span><span>0</span><span>0</span><span>0</span><span>48.555086</span><span></span><span>90°</span><span>90°</span><span>0°</span></div>
<div class="row"><span>arc</span><span>548.555086</span><span>0</span><span>640.616162</span><span>31.573828</span><span>-150</span><span>-150</span><span>99.118453</span><span></span><span>90°</span><span>52°08'22.34"</span><span>-37°51'37.66</span></div>
<div class="row"><span>line</span><span>640.616162</span><span>31.573828</span><span>669.070108</span><span>53.693101</span><span>0</span><span>0</span><span>36.040106</span><span></span><span>52°08'22.34"</span><span>52°08'22.34"</span><span>0°</span></div>
<div class="sb"><svg viewBox="0 0 6 8"><path d="M5 0 1 4l4 4"/></svg><svg viewBox="0 0 6 8"><path d="M1 0l4 4-4 4"/></svg></div>
</div>
<div class="status"></div>
<svg class="resize" viewBox="0 0 12 12"><path d="M2 12 12 2M5.500 12 12 5.500M9 12l3-3"/></svg>
</section>

<section class="dlg vert">
<div class="dtitle"><svg class="i16"><use href="#cube"/></svg><span>Super Alignment Vertical Segments</span><svg class="x" viewBox="0 0 10 10"><path d="M0 0l10 10M10 0 0 10"/></svg></div>
<div class="pick"><label>Super Alignment</label><div class="ro">SA  non zro start ch and  VG parabola-&gt;RS01 VG parabola</div><button class="tb"><svg><use href="#cursor"/></svg></button></div>
<div class="list">
<div class="row hd"><span>Segment Type</span><span>Start ch</span><span>Start ht</span><span>End ch</span><span>End ht</span><span>Ch length</span><span>Start grade</span><span>End grade</span><span>K value</span><span>Radius</span><span>Change of grade</span></div>
<div class="row"><span>grade</span><span>1000</span><span>-2.131651</span><span>1070.310053</span><span>3.08018</span><span>70.310053</span><span>7.412639</span><span>7.412639</span><span>0</span><span>0</span><span>0</span></div>
<div class="row"><span>parabola</span><span>1070.310053</span><span>3.08018</span><span>1087.521747</span><span>2.381071</span><span>17.211694</span><span>7.412639</span><span>-15.536286</span><span>0.75</span><span>-75</span><span>-22.948925</span></div>
<div class="row"><span>grade</span><span>1087.521747</span><span>2.381071</span><span>1091.105174</span><span>1.82434</span><span>3.583427</span><span>-15.536286</span><span>-15.536286</span><span>0</span><span>0</span><span>0</span></div>
<div class="row"><span>parabola</span><span>1091.105174</span><span>1.82434</span><span>1115.070226</span><span>0.711623</span><span>23.965052</span><span>-15.536286</span><span>6.250125</span><span>1.1</span><span>110</span><span>21.786411</span></div>
<div class="row"><span>grade</span><span>1115.070226</span><span>0.711623</span><span>1183.713645</span><span>5.001922</span><span>68.643419</span><span>6.250125</span><span>6.250125</span><span>0</span><span>0</span><span>0</span></div>
<div class="sb"><svg viewBox="0 0 6 8"><path d="M5 0 1 4l4 4"/></svg><i></i><svg viewBox="0 0 6 8"><path d="M1 0l4 4-4 4"/></svg></div>
</div>
<div class="status"></div>
<div class="btns"><button>Finish</button><button class="def">Help</button></div>
<svg class="resize" viewBox="0 0 12 12"><path d="M2 12 12 2M5.500 12 12 5.500M9 12l3-3"/></svg>
</section>

<div class="note n-civil">Civil radius – <u>Ifc</u> <u>RadiusOfCurvature</u> is the negative of this</div>
<div class="note n-start">Alignment has start chainage of 1000</div>
<div class="note n-chain">Chainages <mark>when</mark> alignment has start chainage of 1000</div>
<div class="note n-grade">%Grade – <u>Ifc</u> Gradient is %Grade/100</div>
<div class="note n-vert">Vertical <u>Ifc</u> <u>RadiusOfCurvature</u> is the absolute of this</div>
<svg class="marks" viewBox="0 0 1478 890">
<g class="rings"><rect x="1040.500" y="166.500" width="132" height="87" rx="12"/><rect x="824.500" y="390.500" width="66" height="147.500" rx="11"/><rect x="1125.500" y="394.500" width="130.500" height="144" rx="22"/><rect x="1289.500" y="391" width="48.500" height="145" rx="8"/></g>
<g class="arrows"><path d="M888 69 1061 165"/><path d="M214.500 242 104 429"/><path d="M802.500 307 836 379.500"/><path d="M913 574.500 1115 478.500"/><path d="M1173.500 647.500 1271 541"/></g>
<g class="rot"><path class="stem" d="M1069.500 236v20"/><path class="o" d="M1077 226a8 8 0 1 0-3 7"/><path class="o2" d="M1077 226a8 8 0 1 0-3 7"/><path d="M1071 225h13l-6.500 7z" fill="#fff" stroke="#939393"/><path d="M1073 226a4 4 0 1 0-1 4" fill="none" stroke="#999"/></g>
<g class="hand"><circle cx="754.500" cy="259.500" r="4.800"/><circle cx="1069.500" cy="259.500" r="4.800"/><circle cx="1384.500" cy="259.500" r="4.800"/><circle cx="754.500" cy="282.500" r="4.800"/><circle cx="1384.500" cy="282.500" r="4.800"/><circle cx="754.500" cy="306.500" r="4.800"/><circle cx="1069.500" cy="306.500" r="4.800"/><circle cx="1384.500" cy="306.500" r="4.800"/></g>
</svg>
</body>
</html>
```
FILE: styles.css
```css
*{box-sizing:border-box}
body{margin:0;width:1478px;height:890px;overflow:hidden;position:relative;background:#f0f0f0;font:12px/16px "Open Sans","Noto Sans",sans-serif;color:#111;letter-spacing:-.45px}
svg{display:block;flex:none}
button{font:inherit;letter-spacing:inherit;padding:0;color:inherit}
.defs{position:absolute}
.i16{width:16px;height:16px}
.flip{transform:scaleX(-1)}
.ti text{font-family:"Liberation Sans",sans-serif;font-weight:bold;fill:#223;letter-spacing:0}
.topstrip{display:grid;grid-template-columns:14px 98px 1fr 611px;height:3px;background:#fff}
.topstrip i{background:#ddd}
.topstrip b{background:#0a3aa0;height:2px}
.topstrip s{grid-column:4;background:#2b66c8}
.apptitle{height:29px;background:#fff;display:flex;align-items:center;gap:4px;padding:0 0 2px 8px;border-left:1px solid #555;white-space:pre;letter-spacing:-.6px}
.menu{height:23px;display:grid;grid-template-columns:50px 32px 43px 52px 50px 34px 38px 34px 49px 49px 44px 59px 40px 48px 52px 37px 40px;padding-left:17px;line-height:23px}
.grip{display:block;width:3px;height:15px;background:repeating-linear-gradient(#bbb 0 1px,#f0f0f0 1px 2px);align-self:center}
.box{background:#fff;border:1px solid #eee;border-top:2px solid #777;border-left:2px solid #777;height:19px;line-height:15px;padding-left:4px}
.tb{width:20px;height:21px;border:1px solid #fff;border-right:2px solid #777;border-bottom:2px solid #777;background:#ece9e0;display:grid;place-items:center}
.tb svg{width:18px;height:18px}
.swatch{width:15px;height:15px;background:#0ff}
.fields{height:22px;display:grid;align-items:center;grid-template-columns:8px 88px 24px 108px 25px 87px 24px 66px 25px 88px 24px 45px 25px 55px 22px 25px 6px 25px 681px 24px;padding-left:3px}
.fields .box{margin-right:3px}
.tools{height:28px;display:flex;align-items:center;background:linear-gradient(#f0f0f0,#e6e6e6)}
.tools svg{width:20px;height:20px}
.grp{display:grid;align-items:center}
.files{grid-template-columns:7px 21px 21px 24px 25px 25px 23px 22px 21px;padding-left:3px;width:195px}
.folders{grid-template-columns:11px 25px 25px 25px 25px;width:112px}
.fly{position:relative;display:block}
.fly:after{content:"";position:absolute;border:2px solid transparent;border-right-color:#000;border-bottom-color:#000;left:18px;bottom:0}
.folders .fly:before{position:absolute;left:10px;top:1px;font:bold 8px/9px "Liberation Sans",sans-serif}
.n1:before{content:"I"}.n2:before{content:"II"}.n3:before{content:"III";color:#c00}
.letters{display:grid;grid-template-columns:7px 21px 22px 22px 21px 23px 23px 24px 22px 21px 18px 23px 24px 23px 23px 25px;height:20px;width:346px;margin-top:-5px}
.letters b{font-weight:400;text-align:center;line-height:15px;height:19px;margin-right:2px;border:1px solid #fff;border-right:2px solid #888;border-bottom:2px solid #888;background:#f0f0f0}
.letters b.on{border:1px solid #fff;border-top:2px solid #888;border-left:2px solid #888;background:#f7f7f7}
.snaps{grid-template-columns:9px 25px 25px 25px 25px 25px;width:135px}
.fr svg{width:17px;height:17px;border:1px solid #1487e8;background:#fff}
.fr:after{left:17px;bottom:-1px}
.find{display:grid;grid-template-columns:8px 162px 25px;align-items:center;width:194px}
.find .box{margin-right:2px}
.small{grid-template-columns:8px repeat(12,21.200px);width:266px}
.small svg{width:19px;height:19px}
.g2{grid-template-columns:8px repeat(4,21.600px);width:97px}
.g3{grid-template-columns:8px repeat(6,21px);width:133px}
.workspace{display:flex;height:785px}
.side{width:33px;flex:none;background:#f4f4f4;border-left:1px solid #456;padding:2px 0 0 2px}
.side>span{display:block;height:21.300px}
.side svg{width:20px;height:20px}
.side .fly:after{left:19px;bottom:2px}
.hgrip{display:block;width:18px;height:3px;margin:0 0 4px 3px;background:repeating-linear-gradient(90deg,#bbb 0 1px,#f4f4f4 1px 2px)}
.hgrip~.hgrip{margin:4px 0 4px 3px}
.mdi{flex:1;background:#000;border-top:2px solid #666;border-left:2px solid #666;box-shadow:inset 0 5px #a6a6a6}
.win{position:absolute;display:flex;flex-direction:column}
.wtitle{display:flex;align-items:center;gap:4px;height:30px;flex:none;white-space:pre}
.wbar{display:flex;gap:2px;height:28px;background:#f0f0f0;padding:2px;flex:none;border-top:1px solid #888;border-left:1px solid #888}
.wbar button{width:23px;height:23px;border:1px solid #fff;border-right:2px solid #808080;border-bottom:2px solid #808080;background:#f0ede2;display:grid;place-items:center}
.wbar svg{width:19px;height:19px}
.wbar .wide{width:49px;background:#f0f0f0}
.wbar .cur{border:2px solid #777;background:#e9e9e9}
.gold{fill:#fcd84c}.blue{fill:#18a4e8}
.canvas{background:#000;flex:1;min-height:0}
.plan{left:35px;top:113px;width:730px;height:490px;padding:0 13px 9px 7px;background:#d7e4f2;border-top:1px solid #666;border-radius:5px 0 0 0}
.plan .wtitle{background:linear-gradient(#b9cadb,#d3e0ee);margin:0 -13px 0 -7px;padding:5px 0 0 8px;color:#8b9096;letter-spacing:-.6px}
.plan .wtitle .cap{margin-left:591px;margin-top:-3px}
.plan .canvas{width:709px;margin-left:1px}
.section{left:35px;top:606px;width:788px;height:282px;padding:0 8px 8px 6px;background:#b9d1ea;border:solid #2cc;border-width:0 1px 1px 0;border-top:1px solid #444}
.section .wtitle{height:28px;background:linear-gradient(#98b3d0,#b9d1ea);margin:0 -8px 0 -6px;padding:6px 0 0 6px;letter-spacing:-.51px}
.section .wbar{height:29px}
.cap{width:27px;height:17px;border:1px solid #8594a8;border-radius:3px;background:#c3d2e2}
.section .min{margin:-2px 78px 0 auto;display:grid;place-items:center}
.min:after{content:"";width:11px;height:5px;border:1px solid #556;background:#fff}
.third{left:834px;top:606px;width:644px;height:282px;padding:0 0 9px 8px;background:#d7e4f2;border-top:1px solid #666}
.third .wtitle{height:30px;background:linear-gradient(#b9cadb,#d3e0ee);margin-left:-8px;padding:4px 0 0 574px}
.third .cap{flex:none}
.third .mid{display:grid;place-items:center}
.mid:after{content:"";width:4px;height:3px;border:1px solid #445;outline:3px solid #fff;box-shadow:0 0 0 4px #445}
.sliver{position:absolute;left:823px;top:856px;width:11px;height:32px;background:#a6a6a6;border-top:9px solid #d7e4f2}
.teal{stroke:#00a0a0;fill:none;stroke-width:1.200}
.grid path{stroke:#149010;fill:none;stroke-width:1;shape-rendering:crispEdges}
.grid .dk{stroke:#0b5c08;stroke-width:2}
.red{stroke:#e00c0c;fill:none;stroke-width:1}
.lime{stroke:#00dc00;fill:none;stroke-width:1.200}
.wht{stroke:#fff;fill:none;stroke-width:1}
.cya{stroke:#0ff;fill:none}.cy2{stroke:#00b8b8;fill:none;stroke-width:1.300}
.lab text{font:16.500px "Liberation Sans",sans-serif;fill:#ff0;stroke:#ff0;stroke-width:.4;white-space:pre;letter-spacing:0}
.lab .w{fill:#fff;stroke:#fff}.lab .c{fill:#0ff;stroke:#0ff}
.mono text{font:200 15.500px "DejaVu Sans Mono",monospace;fill:#d2d200;letter-spacing:0;white-space:pre}
.mono.cyan text{fill:#00cccc}
.dlg{position:absolute;background:#f0f0f0;border:1px solid #888;display:flex;flex-direction:column;box-shadow:0 4px 14px rgba(0,0,0,.35);font-size:11px}
.horiz{left:722px;top:108px;width:757px;height:415px;padding:0 5px 0 4px}
.vert{left:740px;top:341px;width:689px;height:448px;padding:0 4px 0 4px}
.dtitle{height:29px;flex:none;background:#fff;margin:0 -5px 0 -4px;padding-left:7px;display:flex;align-items:center;gap:5px;font-size:11.500px;letter-spacing:-.25px}
.vert .dtitle{height:28px;margin-right:-4px}
.dtitle svg.x{width:10px;height:10px;margin:0 10px 0 auto;stroke:#222;stroke-width:1;fill:none}
.horiz .dtitle svg.x{margin-right:9px}
.dtitle .i16{margin-left:1px;width:14px;height:14px}
.pick{display:flex;height:27px;flex:none;align-items:flex-start;padding-top:5px;font-size:11.500px;letter-spacing:-.28px}
.pick label{width:95px}
.vert .pick label{width:96px}
.ro{flex:1;height:18px;border:1px solid #fff;border-top:2px solid #888;border-left:2px solid #888;padding-left:1px;white-space:pre;margin:1px 4px 0 0;line-height:15px}
.pick .tb{width:23px}
.list{background:#fff;border:1px solid #777;border-right:2px solid #999;border-bottom:2px solid #999;flex:none;display:flex;flex-direction:column}
.horiz .list{height:309px}
.vert .list{height:343px}
.row{display:grid;height:22px;flex:none}
.horiz .row{grid-template-columns:78px 63px 57px 63px 57px 64px 61px 57px 38px 73px 68px 1fr}
.vert .row{grid-template-columns:78px 68px 56px 68px 52px 58px 62px 62px 43px 43px 1fr}
.row span{border-right:1px solid #e2e2e2;border-bottom:1px solid #e8e8e8;padding-left:4px;line-height:22px;white-space:nowrap;overflow:hidden}
.row span:first-child{padding-left:3px}
.horiz .row span{padding-left:3px}
.vert .row:nth-child(2){height:23px}
.row.hd{height:23px;letter-spacing:-.2px}
.row.hd span{background:#f0f0f0;border-color:#aaa;border-left:1px solid #fff;line-height:21px;padding-left:2px}
.sb{margin-top:auto;height:15px;background:#f0f0f0;display:flex;align-items:center;justify-content:space-between;padding:0 5px}
.sb svg{width:6px;height:8px;fill:none;stroke:#444;stroke-width:1.600}
.sb i{width:528px;height:15px;background:#cdcdcd;margin-right:auto;margin-left:5px}
.status{height:18px;flex:none;margin-top:3px;border:1px solid #fff;border-top:2px solid #888;border-left:2px solid #888}
.btns{display:flex;gap:203px;padding:3px 0 0 201px;letter-spacing:-.25px}
.btns button{width:36px;height:20px;border:1px solid #fff;border-right:2px solid #777;border-bottom:2px solid #777;background:#f0f0f0}
.btns .def{border:2px solid #777;border-top:1px solid #777}
.resize{position:absolute;right:0;bottom:0;width:12px;height:12px;stroke:#888}
.note{position:absolute;background:#fff;border:1px solid #000;font:24px/44px "Liberation Sans",Arial,sans-serif;letter-spacing:.035px;color:#000;white-space:nowrap;height:46px;padding-left:15px}
.note u{text-decoration:underline wavy #f33 1px;text-underline-offset:2px;text-decoration-skip-ink:none}
.n-civil{left:774px;top:30px;width:655px}
.n-start{left:96px;top:193px;width:445px;height:44px;border:0}
.n-chain{left:755px;top:260px;width:630px;height:47px;border-style:solid dashed dotted}
.n-chain mark{background:#b4b4b4;color:#333}
.n-grade{left:760px;top:574px;width:414px;padding-left:5px}
.n-vert{left:802px;top:658px;width:599px;line-height:42px}
.marks{position:absolute;left:0;top:0;width:1478px;height:890px;pointer-events:none}
.rings rect{fill:none;stroke:#f00;stroke-width:2}
.arrows path{stroke:#f00;stroke-width:2;marker-end:url(#head)}
.rot path.stem{stroke:#888}
.rot .o{fill:none;stroke:#939393;stroke-width:5}
.rot .o2{fill:none;stroke:#fff;stroke-width:2}
.hand circle{fill:#fff;stroke:#939393;stroke-width:2}
```
